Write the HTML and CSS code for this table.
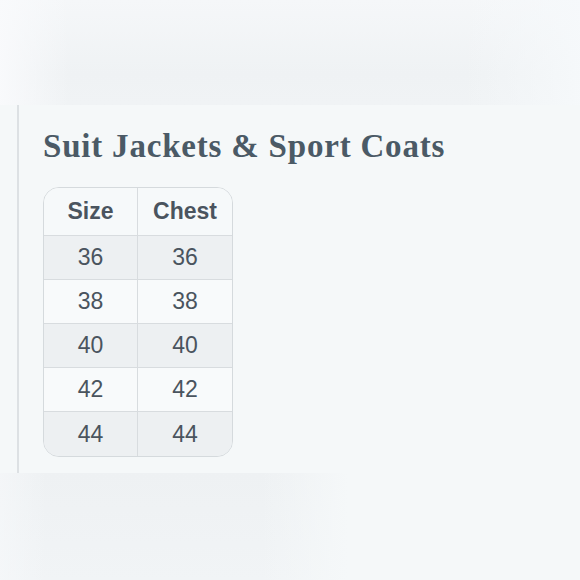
FILE: index.html
```html
<!DOCTYPE html>
<html lang="en">
<head>
<meta charset="utf-8">
<link rel="stylesheet" href="styles.css">
</head>
<body>
<div class="band band-top"></div>
<section class="panel">
  <h2 class="title">Suit Jackets &amp; Sport Coats</h2>
  <div class="table-wrap">
    <table class="sizes">
      <thead>
        <tr><th>Size</th><th>Chest</th></tr>
      </thead>
      <tbody>
        <tr class="alt"><td>36</td><td>36</td></tr>
        <tr><td>38</td><td>38</td></tr>
        <tr class="alt"><td>40</td><td>40</td></tr>
        <tr><td>42</td><td>42</td></tr>
        <tr class="alt"><td>44</td><td>44</td></tr>
      </tbody>
    </table>
  </div>
</section>
<div class="band band-bottom"></div>
</body>
</html>
```

FILE: styles.css
```css
html, body {
  margin: 0;
  padding: 0;
}
body {
  width: 580px;
  height: 580px;
  overflow: hidden;
  background: #f5f8f9;
  font-family: "Liberation Sans", Arial, sans-serif;
  color: #4a545e;
}
.band {
  width: 100%;
}
.band-top {
  height: 105px;
  background:
    linear-gradient(90deg, rgba(249,250,252,0.95) 0%, rgba(248,249,251,0) 12%, rgba(245,247,249,0) 80%, rgba(246,249,251,0.9) 100%),
    linear-gradient(180deg, #f5f7f9 0%, #eff2f4 70%, #f0f3f5 100%);
}
.panel {
  box-sizing: border-box;
  height: 368px;
  margin-left: 17px;
  border-left: 2px solid #dde1e4;
  padding: 23px 0 0 24px;
  background: #f5f8f9;
}
.title {
  margin: 0 0 23px 0;
  font-family: "Liberation Serif", Georgia, serif;
  font-weight: bold;
  font-size: 33px;
  line-height: 36px;
  letter-spacing: 0.8px;
  color: #4b5a66;
}
.table-wrap {
  display: inline-block;
  border: 1px solid #d5dadd;
  border-radius: 16px;
  overflow: hidden;
}
.sizes {
  border-collapse: collapse;
  font-size: 23px;
}
.sizes th,
.sizes td {
  padding: 0;
  text-align: center;
  border-right: 1px solid #d8dcdf;
  border-bottom: 1px solid #d8dcdf;
}
.sizes th:last-child,
.sizes td:last-child {
  border-right: none;
}
.sizes tbody tr:last-child td {
  border-bottom: none;
}
.sizes th {
  height: 47px;
  font-weight: bold;
  background: #f6f9fa;
}
.sizes th:first-child, .sizes td:first-child { width: 93px; }
.sizes th:last-child, .sizes td:last-child { width: 94px; }
.sizes td {
  height: 43px;
  background: #f8fafb;
}
.sizes tbody tr:last-child td {
  height: 44px;
}
.sizes tr.alt td {
  background: #edf0f2;
}
.band-bottom {
  height: 107px;
  background:
    linear-gradient(90deg, rgba(246,248,250,0.7) 0%, rgba(238,241,243,0) 8%, rgba(240,243,245,0) 45%, #f5f8f9 60%),
    linear-gradient(180deg, #eef1f3 0%, #f1f4f6 100%);
}
```
